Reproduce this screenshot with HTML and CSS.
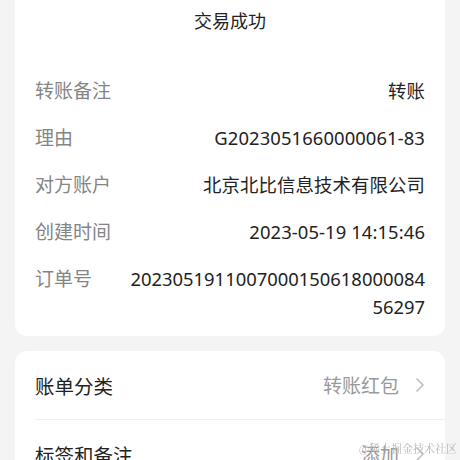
FILE: index.html
```html
<!DOCTYPE html>
<html>
<head>
<meta charset="utf-8">
<title>交易详情</title>
<link rel="stylesheet" href="styles.css">
</head>
<body>

<div class="page">
    <div class="card info">
        <h1 class="title">交易成功</h1>
        <div class="row">
            <span class="label">转账备注</span>
            <span class="value">转账</span>
        </div>
        <div class="row">
            <span class="label">理由</span>
            <span class="value">G2023051660000061-83</span>
        </div>
        <div class="row">
            <span class="label">对方账户</span>
            <span class="value">北京北比信息技术有限公司</span>
        </div>
        <div class="row">
            <span class="label">创建时间</span>
            <span class="value">2023-05-19 14:15:46</span>
        </div>
        <div class="row">
            <span class="label">订单号</span>
            <span class="value num">202305191100700015061800008456297</span>
        </div>
    </div>

    <div class="card menu">
        <div class="item">
            <span class="name">账单分类</span>
            <span class="extra">转账红包</span>
            <svg class="chevron" width="10" height="16" viewBox="0 0 10 16"><path d="M1.5 1.5 L8 8 L1.5 14.5" fill="none" stroke="#bdbdbd" stroke-width="1.5"/></svg>
        </div>
        <div class="item">
            <span class="name">标签和备注</span>
            <span class="extra">添加</span>
            <svg class="chevron" width="10" height="16" viewBox="0 0 10 16"><path d="M1.5 1.5 L8 8 L1.5 14.5" fill="none" stroke="#bdbdbd" stroke-width="1.5"/></svg>
        </div>
    </div>
</div>

<div class="watermark">@稀土掘金技术社区</div>

</body>
</html>
```

FILE: styles.css
```css
body {
    margin: 0;
    background-color: #f4f4f4;
    font-family: "Noto Sans", "Noto Sans CJK SC", sans-serif;
    color: #222;
}
.page {
    padding: 0 15px;
}
.card {
    background-color: #fff;
    border-radius: 12px;
}
.info {
    border-radius: 0 0 12px 12px;
    padding: 7px 20px 15px;
}
.title {
    margin: 0 0 42px;
    text-align: center;
    font-size: 18px;
    font-weight: normal;
    line-height: 28px;
    color: #222;
}
.row {
    display: flex;
    line-height: 28px;
    margin-bottom: 19px;
}
.row:last-child {
    margin-bottom: 0;
}
.label {
    width: 94px;
    flex-shrink: 0;
    font-size: 19px;
    color: #858585;
}
.value {
    flex: 1;
    text-align: right;
    font-size: 18.4px;
    color: #222;
    letter-spacing: 0.1px;
}
.num {
    word-break: break-all;
    letter-spacing: 0;
}
.menu {
    margin-top: 15px;
    padding-left: 20px;
}
.item {
    display: flex;
    align-items: center;
    height: 68px;
    padding-right: 20px;
    border-bottom: 1px solid #f0f0f0;
}
.name {
    flex: 1;
    font-size: 19.5px;
    color: #222;
}
.extra {
    font-size: 19px;
    color: #999;
    margin-right: 16px;
}
.chevron {
    display: block;
}
.watermark {
    position: fixed;
    right: 3px;
    bottom: 4px;
    font-family: "Noto Serif CJK SC", "Noto Sans CJK SC", serif;
    font-size: 11px;
    color: #b5b5b5;
}
```
